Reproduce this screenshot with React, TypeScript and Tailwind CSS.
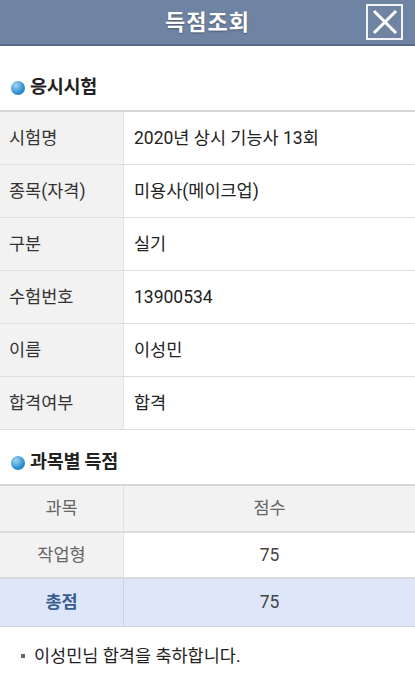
const font = { fontFamily: 'Roboto, "Noto Sans CJK KR", sans-serif' };

const examRows = [
  ['시험명', '2020년 상시 기능사 13회'],
  ['종목(자격)', '미용사(메이크업)'],
  ['구분', '실기'],
  ['수험번호', '13900534'],
  ['이름', '이성민'],
  ['합격여부', '합격'],
];

function SectionTitle({ children }: { children: React.ReactNode }) {
  return (
    <div className="flex items-center gap-[5px] pl-[11px] h-[24px]">
      <span className="w-[14px] h-[14px] rounded-full bg-[radial-gradient(circle_at_35%_30%,#9fd6f5,#2f8fd0_60%,#1d6fae)]" />
      <span className="text-[18.5px] font-bold text-[#222] tracking-[-0.3px]">{children}</span>
    </div>
  );
}

function CloseIcon() {
  return (
    <div className="w-[37px] h-[36px] border-2 border-white/90 flex items-center justify-center">
      <svg width="26" height="26" viewBox="0 0 26 26">
        <path d="M3 3 L23 23 M23 3 L3 23" stroke="white" strokeWidth="3" strokeLinecap="square" />
      </svg>
    </div>
  );
}

export default function App() {
  return (
    <div className="w-[415px] h-[699px] bg-white overflow-hidden" style={font}>
      <header className="relative h-[46px] bg-[#6f84a3] border-b-2 border-[#56698a] flex items-center justify-center">
        <h1 className="text-[22px] font-bold text-white tracking-[1px] [text-shadow:0_1px_2px_rgba(0,0,0,0.35)]">득점조회</h1>
        <div className="absolute right-[12px] top-[4px]">
          <CloseIcon />
        </div>
      </header>

      <div className="pt-[30px] pb-[10px]">
        <SectionTitle>응시시험</SectionTitle>
      </div>
      <div className="border-t-2 border-[#d6d6d6]">
        {examRows.map(([label, value]) => (
          <div key={label} className="flex h-[53px] border-b border-[#dddddd]">
            <div className="w-[124px] bg-[#f2f2f2] border-r border-[#e6e6e6] flex items-center pl-[9px] text-[17.5px] text-[#333]">
              {label}
            </div>
            <div className="flex-1 flex items-center pl-[10px] text-[17.5px] text-[#222]">{value}</div>
          </div>
        ))}
      </div>

      <div className="pt-[21px] pb-[9px]">
        <SectionTitle>과목별 득점</SectionTitle>
      </div>
      <div className="border-t-2 border-[#d6d6d6] text-[17.5px]">
        <div className="flex h-[47px] bg-[#f2f2f2] border-b-2 border-[#dddddd] text-[#666]">
          <div className="w-[124px] border-r border-[#e2e2e2] flex items-center justify-center">과목</div>
          <div className="flex-1 flex items-center justify-center">점수</div>
        </div>
        <div className="flex h-[46px] border-b-2 border-[#d9d9d9]">
          <div className="w-[124px] bg-[#f2f2f2] border-r border-[#e6e6e6] flex items-center justify-center text-[#666]">작업형</div>
          <div className="flex-1 flex items-center justify-center text-[#444]">75</div>
        </div>
        <div className="flex h-[48px] bg-[#dde7f9] border-b border-[#cfd5de]">
          <div className="w-[124px] border-r border-[#cad3e3] flex items-center justify-center font-bold text-[#3b5d8f]">총점</div>
          <div className="flex-1 flex items-center justify-center text-[#444]">75</div>
        </div>
      </div>

      <div className="flex items-center pl-[21px] pt-[16px] text-[17.5px] text-[#222]">
        <span className="w-[4px] h-[4px] bg-[#666] mr-[9px]" />
        이성민님 합격을 축하합니다.
      </div>
    </div>
  );
}
